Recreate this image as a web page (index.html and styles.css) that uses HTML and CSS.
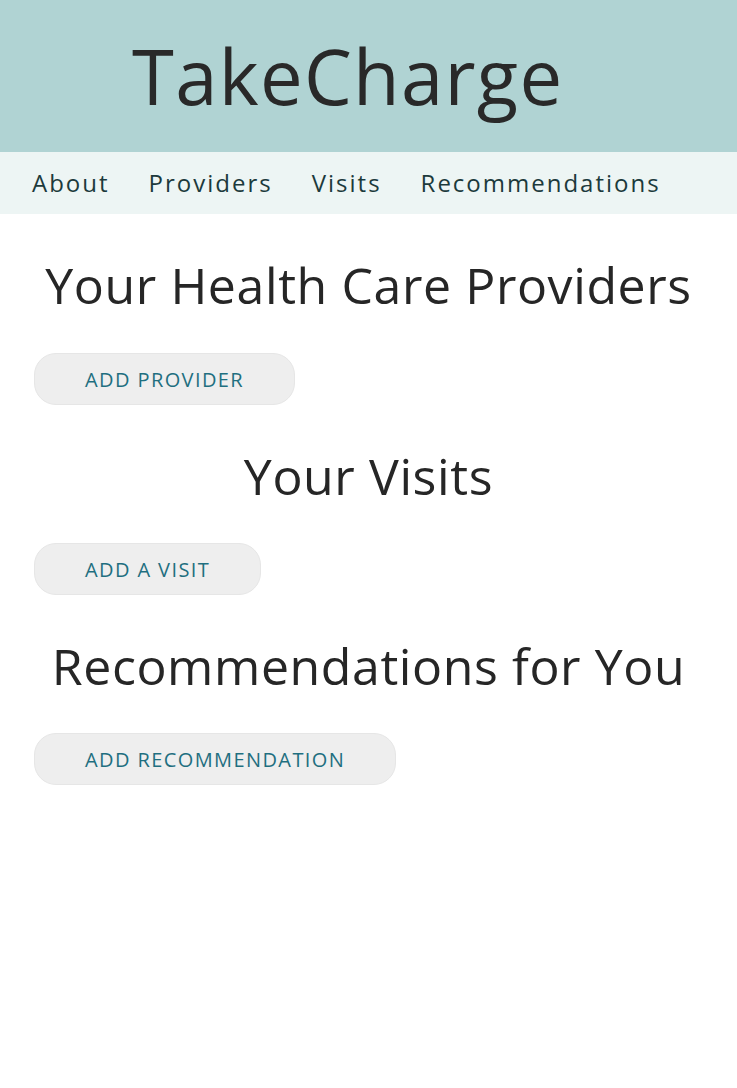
FILE: index.html
```html
<!DOCTYPE html>
<html lang="en">
<head>
<meta charset="utf-8">
<title>TakeCharge</title>
<link rel="stylesheet" href="styles.css">
</head>
<body>
<header class="masthead">
  <h1 class="brand">TakeCharge</h1>
</header>
<nav class="topnav">
  <a class="navlink" href="#about">About</a>
  <a class="navlink" href="#providers">Providers</a>
  <a class="navlink" href="#visits">Visits</a>
  <a class="navlink" href="#recs">Recommendations</a>
</nav>
<main class="content">
  <section class="block" id="providers">
    <h2 class="block-title">Your Health Care Providers</h2>
    <button class="add-btn" type="button">ADD PROVIDER</button>
  </section>
  <section class="block" id="visits">
    <h2 class="block-title">Your Visits</h2>
    <button class="add-btn" type="button">ADD A VISIT</button>
  </section>
  <section class="block" id="recs">
    <h2 class="block-title">Recommendations for You</h2>
    <button class="add-btn" type="button">ADD RECOMMENDATION</button>
  </section>
</main>
</body>
</html>
```
FILE: styles.css
```css
* { box-sizing: border-box; }
html, body { margin: 0; padding: 0; background: #ffffff; }
body {
  font-family: "Open Sans", "DejaVu Sans", sans-serif;
  color: #262626;
}
.masthead {
  height: 152px;
  background: #b0d3d3;
  display: flex;
  align-items: center;
  padding-left: 132px;
}
.brand {
  margin: 0;
  font-size: 76px;
  font-weight: 400;
  line-height: 1;
  letter-spacing: 1.3px;
  color: #292929;
}
.topnav {
  height: 62px;
  background: #edf5f4;
  display: flex;
  align-items: center;
  gap: 39px;
  padding-left: 32px;
}
.navlink {
  font-size: 24px;
  letter-spacing: 2px;
  color: #1c3a3c;
  text-decoration: none;
  line-height: 1;
}
.content {
  padding: 0 34px;
}
.block {
  display: flex;
  flex-direction: column;
  align-items: flex-start;
}
.block-title {
  align-self: stretch;
  text-align: center;
  margin: 0;
  font-size: 50px;
  font-weight: 400;
  line-height: 1;
  letter-spacing: 0.6px;
  color: #262626;
}
.block:first-child .block-title { margin-top: 46px; }
.block + .block .block-title { margin-top: 46px; }
.add-btn {
  margin-top: 43px;
  height: 52px;
  padding: 0 50px;
  border: 1px solid #e6e6e6;
  border-radius: 22px;
  background: #eeeeee;
  font-family: inherit;
  font-size: 20px;
  letter-spacing: 1.4px;
  color: #1f6f80;
  cursor: pointer;
}
.block + .block .add-btn { margin-top: 42px; }
```
